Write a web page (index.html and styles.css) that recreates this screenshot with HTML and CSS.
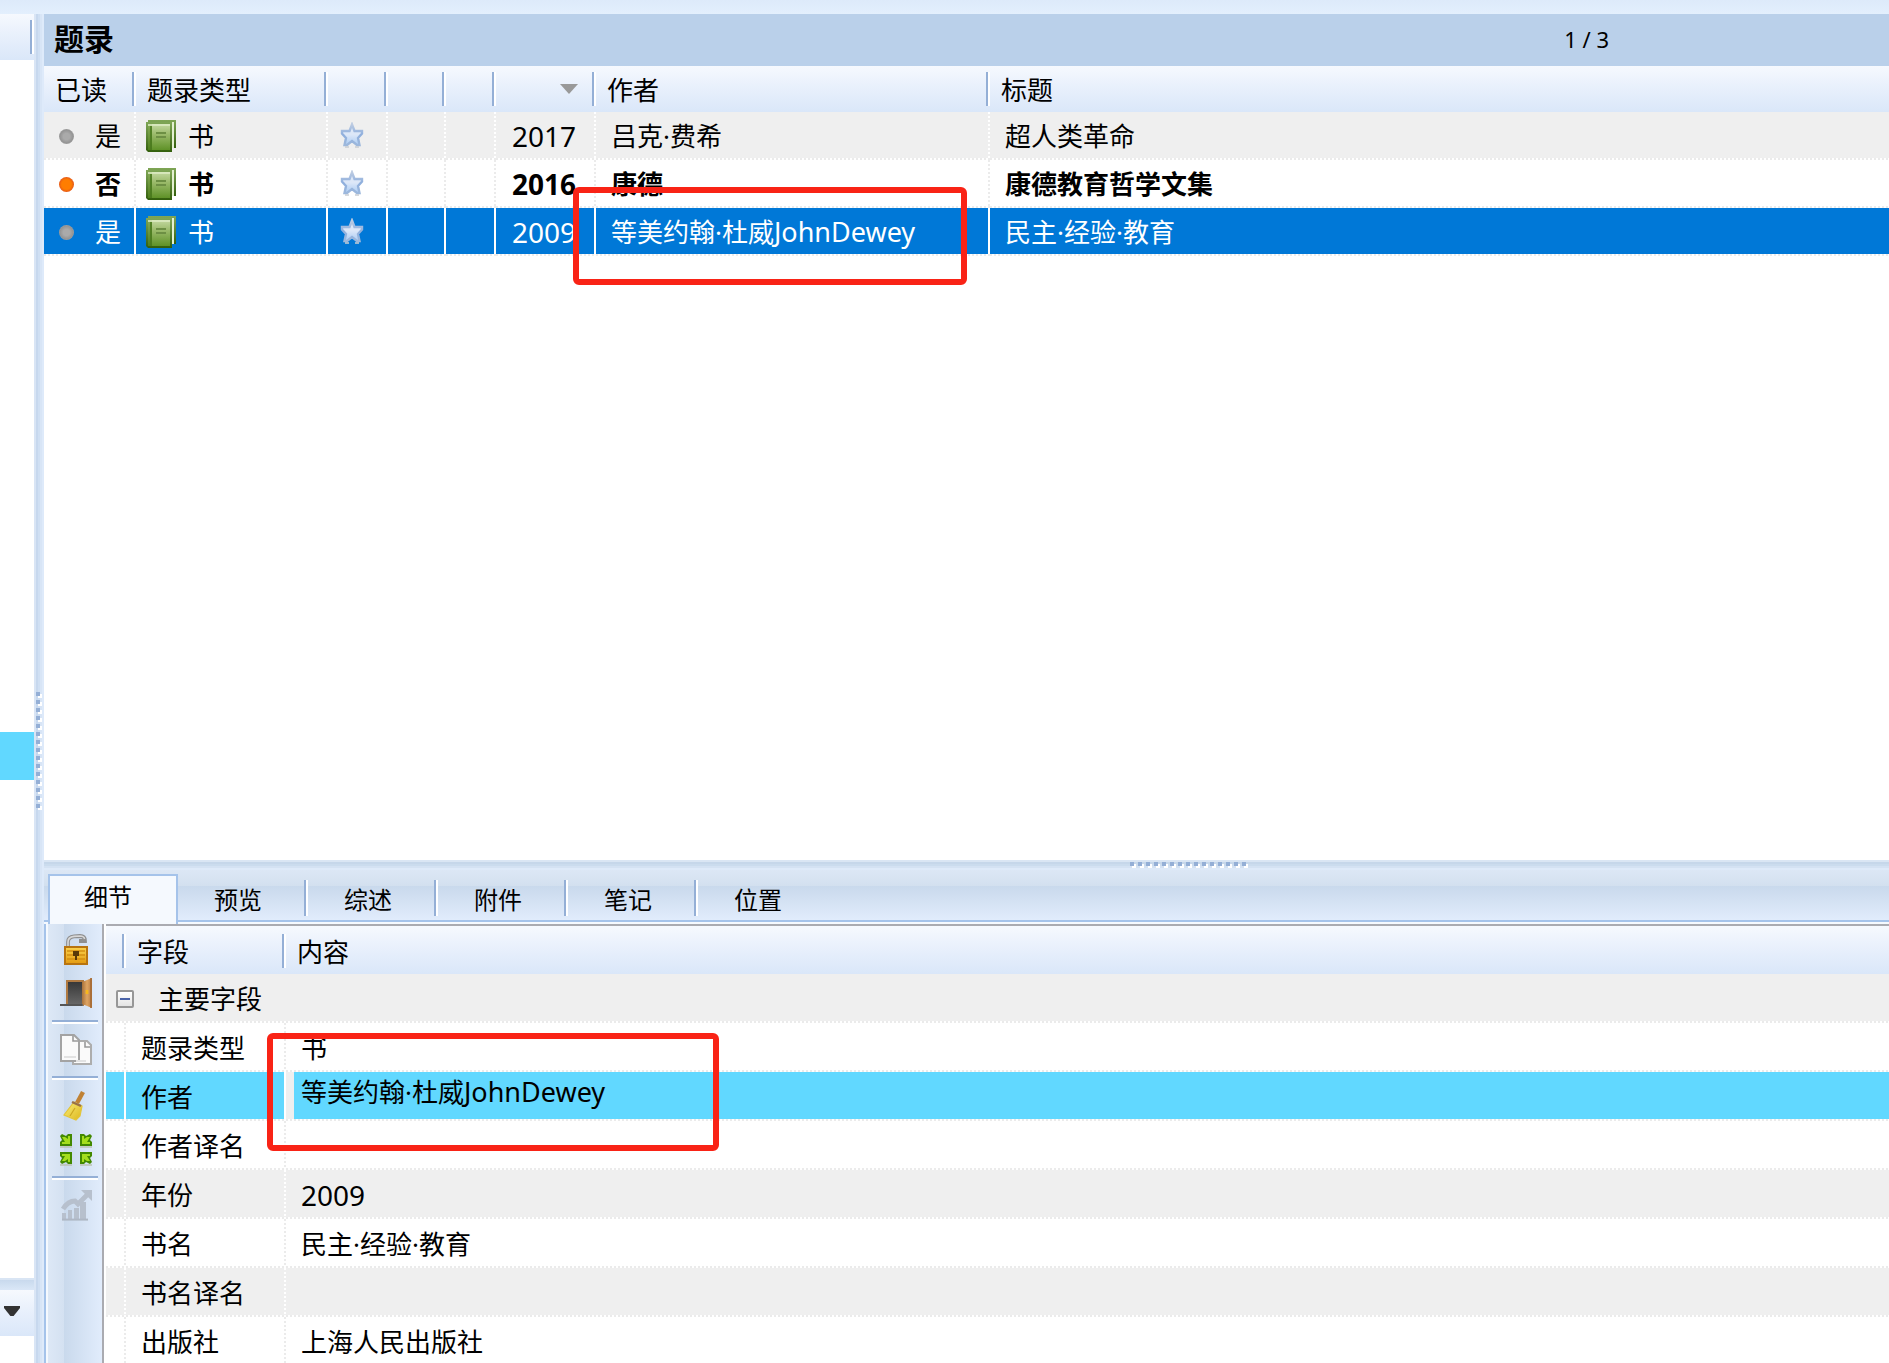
FILE: index.html
```html
<!DOCTYPE html>
<html lang="zh-CN">
<head>
<meta charset="utf-8">
<title>题录</title>
<link rel="stylesheet" href="styles.css">
</head>
<body>
<svg class="defs" aria-hidden="true">
  <defs>
    <linearGradient id="bookFill" x1="0" y1="0" x2="0" y2="1"><stop offset="0" stop-color="#c3d8a0"/><stop offset=".4" stop-color="#9aba6a"/><stop offset="1" stop-color="#5f9228"/></linearGradient>
    <linearGradient id="spineFill" x1="0" y1="0" x2="0" y2="1"><stop offset="0" stop-color="#86ab58"/><stop offset="1" stop-color="#4f7f1c"/></linearGradient>
    <linearGradient id="edgeFill" x1="0" y1="0" x2="0" y2="1"><stop offset="0" stop-color="#7fa656"/><stop offset="1" stop-color="#335f0c"/></linearGradient>
    <linearGradient id="starFill" x1="0" y1="0" x2="0" y2="1"><stop offset="0" stop-color="#dfe8f4"/><stop offset=".5" stop-color="#dce7f8"/><stop offset="1" stop-color="#a9cbf3"/></linearGradient>
    <linearGradient id="starLine" x1="0" y1="0" x2="0" y2="1"><stop offset="0" stop-color="#bccbe2"/><stop offset=".5" stop-color="#8fafdd"/><stop offset="1" stop-color="#9db8dc"/></linearGradient>
    <linearGradient id="lockFill" x1="0" y1="0" x2="0" y2="1"><stop offset="0" stop-color="#fbd34e"/><stop offset="1" stop-color="#e39a10"/></linearGradient>
    <linearGradient id="doorDark" x1="0" y1="0" x2="0" y2="1"><stop offset="0" stop-color="#383838"/><stop offset="1" stop-color="#6a6a6a"/></linearGradient>
    <linearGradient id="doorWood" x1="0" y1="0" x2="1" y2="0"><stop offset="0" stop-color="#a8713a"/><stop offset=".5" stop-color="#dfa563"/><stop offset="1" stop-color="#b97b40"/></linearGradient>
    <linearGradient id="broomFill" x1="0" y1="0" x2="1" y2="1"><stop offset="0" stop-color="#fbf07a"/><stop offset="1" stop-color="#dcb51c"/></linearGradient>
    <symbol id="book" viewBox="0 0 15 16">
      <path d="M1 0h14v14h-1V1H1z" fill="url(#edgeFill)"/>
      <path d="M1 1h13v13h-1V2H1z" fill="#e4f0d2"/>
      <path d="M0 1h13v15H1L0 15z" fill="url(#edgeFill)"/>
      <path d="M1 2h2v13H1z" fill="url(#spineFill)"/>
      <path d="M3 2h9v13H3z" fill="url(#bookFill)"/>
      <path d="M1 2.500h11" stroke="#dcebc4" stroke-width=".8"/>
      <path d="M2.500 3v12" stroke="#4a7a1e" stroke-width=".8"/>
      <path d="M5 6.500h5M5 8.500h5" stroke="#6d8f44" stroke-width="1"/>
    </symbol>
    <symbol id="star" viewBox="0 0 24 26">
      <path d="M12 2.500l2.500 6.500H22v2.500l-4 4.500 1.500 7h-2.500l-5-4-5 4H4.500L6 16 2 11.500V9h7.500z" fill="url(#starFill)" stroke="url(#starLine)" stroke-width="2.400"/>
      <path d="M5 25h4M15 25h4" stroke="#c9cdd2" stroke-width="1.500"/>
    </symbol>
  </defs>
</svg>

<div class="app">
  <aside class="side">
    <div class="side-head"></div>
    <div class="side-list"><div class="side-selected"></div></div>
    <div class="side-splitter"></div>
    <div class="side-foot"><button class="drop" type="button" aria-label="展开"></button></div>
    <div class="side-rest"></div>
  </aside>

  <div class="splitter-v"><span class="grip grip-v"></span></div>

  <main class="main">
    <section class="list">
      <header class="title-bar"><h1>题录</h1><span class="counter">1 / 3</span></header>
      <table class="grid refs">
        <colgroup><col class="c-read"><col class="c-type"><col class="c-star"><col class="c-a"><col class="c-b"><col class="c-year"><col class="c-author"><col></colgroup>
        <thead>
          <tr><th>已读</th><th>题录类型</th><th></th><th></th><th></th><th><span class="sort"></span></th><th>作者</th><th class="last">标题</th></tr>
        </thead>
        <tbody>
          <tr class="alt">
            <td><span class="read"><i class="dot"></i>是</span></td>
            <td><span class="kind"><svg class="book"><use href="#book"/></svg>书</span></td>
            <td><svg class="star"><use href="#star"/></svg></td><td></td><td></td>
            <td class="year digits">2017</td><td>吕克·费希</td><td class="last">超人类革命</td>
          </tr>
          <tr class="unread">
            <td><span class="read"><i class="dot"></i>否</span></td>
            <td><span class="kind"><svg class="book"><use href="#book"/></svg>书</span></td>
            <td><svg class="star"><use href="#star"/></svg></td><td></td><td></td>
            <td class="year digits">2016</td><td>康德</td><td class="last">康德教育哲学文集</td>
          </tr>
          <tr class="selected">
            <td><span class="read"><i class="dot"></i>是</span></td>
            <td><span class="kind"><svg class="book"><use href="#book"/></svg>书</span></td>
            <td><svg class="star"><use href="#star"/></svg></td><td></td><td></td>
            <td class="year digits">2009</td><td>等美约翰·杜威<span class="latin">JohnDewey</span></td><td class="last">民主·经验·教育</td>
          </tr>
        </tbody>
      </table>
    </section>

    <section class="details">
      <div class="splitter-h"><span class="grip grip-h"></span></div>
      <nav class="tabs" role="tablist">
        <button class="tab active" role="tab" type="button">细节</button>
        <button class="tab" role="tab" type="button">预览</button>
        <button class="tab" role="tab" type="button">综述</button>
        <button class="tab" role="tab" type="button">附件</button>
        <button class="tab" role="tab" type="button">笔记</button>
        <button class="tab no-sep" role="tab" type="button">位置</button>
      </nav>
      <div class="panel">
        <div class="tools">
          <button type="button" aria-label="解锁"><svg viewBox="0 0 16 16">
            <path d="M4 6V4Q4 1.500 7 1.200L10 1Q12.500 1 12.500 3.500H9.500" fill="none" stroke="#8f8f8f" stroke-width="1.900"/>
            <path d="M4 6V4Q4 1.500 7 1.200L10 1Q12 1 12.300 2.500" fill="none" stroke="#d8d8d8" stroke-width=".8"/>
            <path d="M2.500 6.500h11v8.500h-11z" fill="url(#lockFill)" stroke="#b87410"/>
            <path d="M3.500 8.500h9M3.500 10.500h9M3.500 12.500h9" stroke="#d58f10" stroke-width=".8"/>
            <path d="M6.500 8.500h3v2.500h-1v2h-1v-2h-1z" fill="#5a3a08"/>
          </svg></button>
          <button type="button" aria-label="打开"><svg viewBox="0 0 16 16">
            <path d="M3 1h9v13H3z" fill="#b07a42"/><path d="M4 2h7.500v12H4z" fill="url(#doorDark)"/>
            <path d="M0 13.500h11" stroke="#555"/><path d="M11 2l5-2v15l-5-2z" fill="url(#doorWood)"/>
            <path d="M15.500 0v15" stroke="#a56b35" stroke-width=".8"/><path d="M13.500 6v2" stroke="#f8b81c" stroke-width="1.400"/>
          </svg></button>
          <hr>
          <button type="button" aria-label="复制"><svg viewBox="0 0 16 16">
            <path d="M6.500 3.500h7l2 2V15h-9z" fill="#fafafa" stroke="#adadad"/><path d="M12.500 4v2.500H15" fill="none" stroke="#999" stroke-width=".8"/>
            <path d="M.5.500h6.500L9.500 3v10.500h-9z" fill="#fafafa" stroke="#a3a3a3"/><path d="M6.500 1v2.500H9" fill="none" stroke="#999" stroke-width=".8"/>
            <path d="M2 11.500h6M8 13.500h5" stroke="#e2e2e2"/>
          </svg></button>
          <hr>
          <button type="button" aria-label="清理"><svg viewBox="0 0 16 16">
            <path d="M11.500 1L8.500 6.500" stroke="#c08234" stroke-width="2.200"/>
            <path d="M7 6l4 2-1 5-2 2-6-2.500z" fill="url(#broomFill)" stroke="#e3c53a" stroke-width=".6"/>
            <path d="M6 6l4.500 2" stroke="#997148" stroke-width="1.200"/><path d="M5 13l2.500-4" stroke="#cda822" stroke-width=".6"/>
          </svg></button>
          <button type="button" aria-label="收缩"><svg viewBox="0 0 16 16">
            <path d="M0 1l1-1 2 1 1-1h2v6H0V4l1-1zM10 0h2l1 1 2-1 1 1-1 2 1 1v2h-6zM0 9h6v6H4l-1-1-2 1-1-1 1-2-1-1zM10 9h6v2l-1 1 1 2-1 1-2-1-1 1h-2z" fill="#438900"/>
            <path d="M1 1.500h1.500L4 2.500V1h1v4H1V4h1.500zM15 1.500h-1.500L12 2.500V1h-1v4h4V4h-1.500zM1 13.500h1.500L4 12.500V14h1v-4H1v1h1.500zM15 13.500h-1.500L12 12.500V14h-1v-4h4v1h-1.500z" fill="#a5de1c"/>
            <path d="M0 6.500h6M10 6.500h6M0 15.500h6M10 15.500h6" stroke="#b9bfae" stroke-opacity=".7"/>
          </svg></button>
          <hr>
          <button type="button" aria-label="统计" disabled><svg viewBox="0 0 16 16">
            <path d="M1.500 9.500Q4 5.500 7.500 5.500L9 7l5-5" fill="none" stroke="#b7c0cd" stroke-width="2.400"/>
            <path d="M10.500 0H16v5.500zM10 6h3v9h-3zM1 11.500h2V15H1zM4 10h2v5H4zM7 9h2.500v6H7z" fill="#b7c0cd"/>
            <path d="M1 14.800h13" stroke="#aeb7c4" stroke-width="1"/>
          </svg></button>
        </div>
        <table class="grid fields">
          <colgroup><col class="c-exp"><col class="c-field"><col></colgroup>
          <thead><tr><th></th><th>字段</th><th class="last">内容</th></tr></thead>
          <tbody>
            <tr class="alt group"><td colspan="3" class="last"><span class="group-name"><button class="collapse" type="button" aria-label="折叠"></button>主要字段</span></td></tr>
            <tr><td></td><td>题录类型</td><td class="last">书</td></tr>
            <tr class="current"><td></td><td>作者</td><td class="last editing"><div class="editor">等美约翰·杜威<span class="latin">JohnDewey</span></div></td></tr>
            <tr><td></td><td>作者译名</td><td class="last"></td></tr>
            <tr class="alt"><td></td><td>年份</td><td class="last digits">2009</td></tr>
            <tr><td></td><td>书名</td><td class="last">民主·经验·教育</td></tr>
            <tr class="alt"><td></td><td>书名译名</td><td class="last"></td></tr>
            <tr><td></td><td>出版社</td><td class="last">上海人民出版社</td></tr>
          </tbody>
        </table>
      </div>
    </section>
  </main>
</div>
<div class="mark mark-list"></div>
<div class="mark mark-field"></div>
</body>
</html>
```

FILE: styles.css
```css
:root {
  --line: #94afd6;
  --tab-line: #a5c3ea;
  --head: linear-gradient(#f6f9fe, #eaf1fc 40%, #dae7f9);
  --cyan: #61d8ff;
}

* { box-sizing: border-box; }

body {
  position: relative;
  margin: 0;
  height: 100vh;
  overflow: hidden;
  background: #fff;
  color: #000;
  font-family: "Noto Sans", "Noto Sans CJK SC", sans-serif;
  font-size: 26px;
  line-height: 36px;
}

button {
  padding: 0;
  border: 0;
  background: none;
  color: inherit;
  font: inherit;
}

.defs { position: absolute; width: 0; height: 0; }
.latin { font-size: 27px; }
.digits { font-size: 28px; }

.app {
  display: flex;
  height: 100%;
  padding-top: 14px;
  background: linear-gradient(#ddeafa, #e3effd 14px);
}

/* Left pane */
.side {
  display: flex;
  flex: 0 0 34px;
  flex-direction: column;
  background: #fff;
}

.side-head, .side-foot {
  flex: 0 0 46px;
  background: var(--head);
}

.side-head { padding: 6px 0 6px 30px; }
.side-head::after {
  content: "";
  display: block;
  width: 4px;
  height: 34px;
  background: linear-gradient(to right, var(--line) 2px, #fff 2px);
}

.side-list { flex: 1; padding-top: 672px; }
.side-selected { height: 48px; background: var(--cyan); }
.side-splitter { flex: 0 0 12px; background: linear-gradient(#d9e5f4 2px, #c8d9ed 2px, #dae7f7); }
.side-foot { padding: 16px 4px; }
.side-rest { flex: 0 0 27px; }

.drop {
  display: block;
  width: 16px;
  height: 10px;
  background: #333;
  clip-path: polygon(0 0, 100% 0, 100% 20%, 60% 100%, 40% 100%, 0 20%);
}

/* Splitters */
.splitter-v {
  display: flex;
  flex: 0 0 10px;
  align-items: flex-start;
  padding: 678px 2px 0;
  background: linear-gradient(to right, #d9e5f5 2px, #c7d8ee 2px 4px, #cfdff3 4px 6px, #d8e5f6 6px 8px, #deeafa 8px);
}

.splitter-h {
  display: flex;
  flex: 0 0 10px;
  padding: 2px 0 0 1086px;
  background: linear-gradient(#dae6f4 2px, #c6d7ea 2px 4px, #cbdcee 4px 6px, #d4e2f3 6px 8px, #deeaf9 8px);
}

.grip-v {
  width: 6px;
  height: 118px;
  background:
    repeating-linear-gradient(var(--line) 0 4px, transparent 4px 8px) 0 0 / 4px 100% no-repeat,
    repeating-linear-gradient(transparent 0 2px, #fff 2px 6px, transparent 6px 8px) 2px 0 / 4px 100% no-repeat;
}

.grip-h {
  width: 118px;
  height: 6px;
  background:
    repeating-linear-gradient(to right, var(--line) 0 4px, transparent 4px 8px) 0 0 / 100% 4px no-repeat,
    repeating-linear-gradient(to right, transparent 0 2px, #fff 2px 6px, transparent 6px 8px) 0 2px / 100% 4px no-repeat;
}

.main {
  display: flex;
  flex: 1;
  flex-direction: column;
  min-width: 0;
}

/* Reference list */
.list { flex: 1; min-height: 0; background: #fff; }

.title-bar {
  display: flex;
  align-items: center;
  justify-content: space-between;
  height: 52px;
  padding: 0 280px 2px 10px;
  background: #bad0ea;
}

.title-bar h1 { margin: 0; font-size: 30px; line-height: 40px; }
.counter { font-size: 22px; }

.grid {
  width: 100%;
  border-spacing: 0;
  table-layout: fixed;
}

.grid th {
  height: 46px;
  padding: 2px 10px 0 11px;
  background:
    linear-gradient(to right, var(--line) 2px, #fff 2px) right 0 top 6px / 4px 34px no-repeat,
    var(--head);
  font-weight: 400;
  text-align: left;
}

.grid th.last { background: var(--head); }

.grid td {
  --fill: #fff;
  --vdot: #ebebeb;
  --vgap: transparent;
  height: 48px;
  padding: 0 16px 0 15px;
  background:
    repeating-linear-gradient(to right, #ebebeb 0 2px, #fff 2px 4px) 0 100% / 100% 2px no-repeat,
    repeating-linear-gradient(var(--vdot) 0 2px, var(--vgap) 2px 4px) 100% 0 / 2px 100% no-repeat,
    linear-gradient(var(--fill), var(--fill)) 0 0 / 100% 100% no-repeat;
  white-space: nowrap;
}

.grid .alt td { --fill: #efefef; --vdot: #fff; }
.grid .selected td { --fill: #0078d7; --vdot: #fff; --vgap: #fff; color: #fff; }
.grid td.last {
  background:
    repeating-linear-gradient(to right, #ebebeb 0 2px, #fff 2px 4px) 0 100% / 100% 2px no-repeat,
    linear-gradient(var(--fill), var(--fill));
}
.unread { font-weight: 700; }

.c-read { width: 92px; }
.c-type { width: 192px; }
.c-star { width: 60px; }
.c-a { width: 58px; }
.c-b { width: 50px; }
.c-year { width: 100px; }
.c-author { width: 394px; }

.sort {
  display: block;
  width: 18px;
  height: 10px;
  margin: 0 8px 2px auto;
  background: #999;
  clip-path: polygon(0 0, 100% 0, 50% 100%);
}

.read, .kind { display: flex; align-items: center; }
.read { gap: 21px; }
.kind { gap: 12px; }
.refs td:first-child { padding-right: 0; }
.refs td:nth-child(2) { padding-left: 10px; }
.refs td:nth-child(3) { padding-left: 12px; }

.dot {
  width: 15px;
  height: 15px;
  border-radius: 50%;
  background: radial-gradient(#aaa 30%, #959595 60%, #b5b5b5);
}

.unread .dot { background: radial-gradient(#ff7d00 45%, #dd4c20 80%); }
.book { display: block; width: 30px; height: 32px; }
.star { display: block; width: 24px; height: 26px; margin-bottom: 2px; }
.refs .year { padding-right: 20px; padding-left: 0; text-align: right; }

/* Details */
.details {
  display: flex;
  flex: 0 0 503px;
  flex-direction: column;
  overflow: hidden;
}

.tabs {
  display: flex;
  flex: 0 0 54px;
  align-items: flex-end;
  padding-left: 4px;
  background: linear-gradient(#dce7f5, #d3e0ef 16px, #c9d9ec 16px, #e1ecfc 50px, var(--tab-line) 50px 52px, #f5f9fe 52px);
}

.tab {
  width: 130px;
  height: 50px;
  padding: 2px 0 0 36px;
  background: linear-gradient(to right, var(--line) 2px, #fff 2px) right 0 top 6px / 4px 36px no-repeat;
  font-size: 24px;
  text-align: left;
}

.tab.active {
  padding: 0 0 6px 34px;
  border: 2px solid var(--tab-line);
  border-bottom: 0;
  background: #f5f9fe;
}

.tab.no-sep { background: none; }

.panel {
  display: flex;
  flex: 1;
  min-height: 0;
  border-left: 2px solid var(--tab-line);
  background: #fff;
}

.tools {
  display: flex;
  flex: 0 0 58px;
  flex-direction: column;
  gap: 12px;
  padding: 10px 4px 0 6px;
  border-right: 2px solid #aaabb1;
  border-left: 2px solid #f5f9fe;
  background: linear-gradient(to right, #dde8f6, #d4e1f1 16px, #c9d9ec 16px, #e1ecfc);
}

.tools button { width: 32px; height: 32px; margin-left: 6px; }
.tools svg { display: block; width: 32px; height: 32px; }

.tools hr {
  width: 46px;
  height: 4px;
  margin: -2px 0 -2px -2px;
  border: 0;
  background: linear-gradient(var(--line) 2px, #fff 2px);
}

.fields {
  align-self: flex-start;
  flex: 1;
  margin-left: 2px;
  border-top: 2px solid #aaabb1;
}

.c-exp { width: 20px; }
.c-field { width: 160px; }

.fields th {
  height: 48px;
  padding-top: 4px;
  background-position: right 0 top 8px, 0 0;
}

.fields td { height: 49px; padding-left: 15px; padding-right: 0; }
.fields td:first-child { padding-left: 0; }
.group-name { display: flex; align-items: center; gap: 24px; padding-left: 10px; }

.collapse {
  width: 18px;
  height: 18px;
  border: 2px solid #979797;
  border-radius: 2px;
  background: linear-gradient(#4a63a8, #4a63a8) center / 10px 2px no-repeat, linear-gradient(#fff, #e4e4e4);
}

.grid .current td { --fill: var(--cyan); --vdot: #fff; --vgap: #fff; }
.grid .current td.editing { --fill: #efefef; padding-left: 8px; vertical-align: top; }
.editor { height: 47px; padding: 2px 7px 0; background: var(--cyan); }

/* Review marks drawn over the window */
.mark {
  position: absolute;
  border: 6px solid #f92316;
  border-radius: 6px;
  pointer-events: none;
}

.mark-list { top: 187px; left: 573px; width: 394px; height: 98px; }
.mark-field { top: 1033px; left: 267px; width: 452px; height: 118px; }
```
